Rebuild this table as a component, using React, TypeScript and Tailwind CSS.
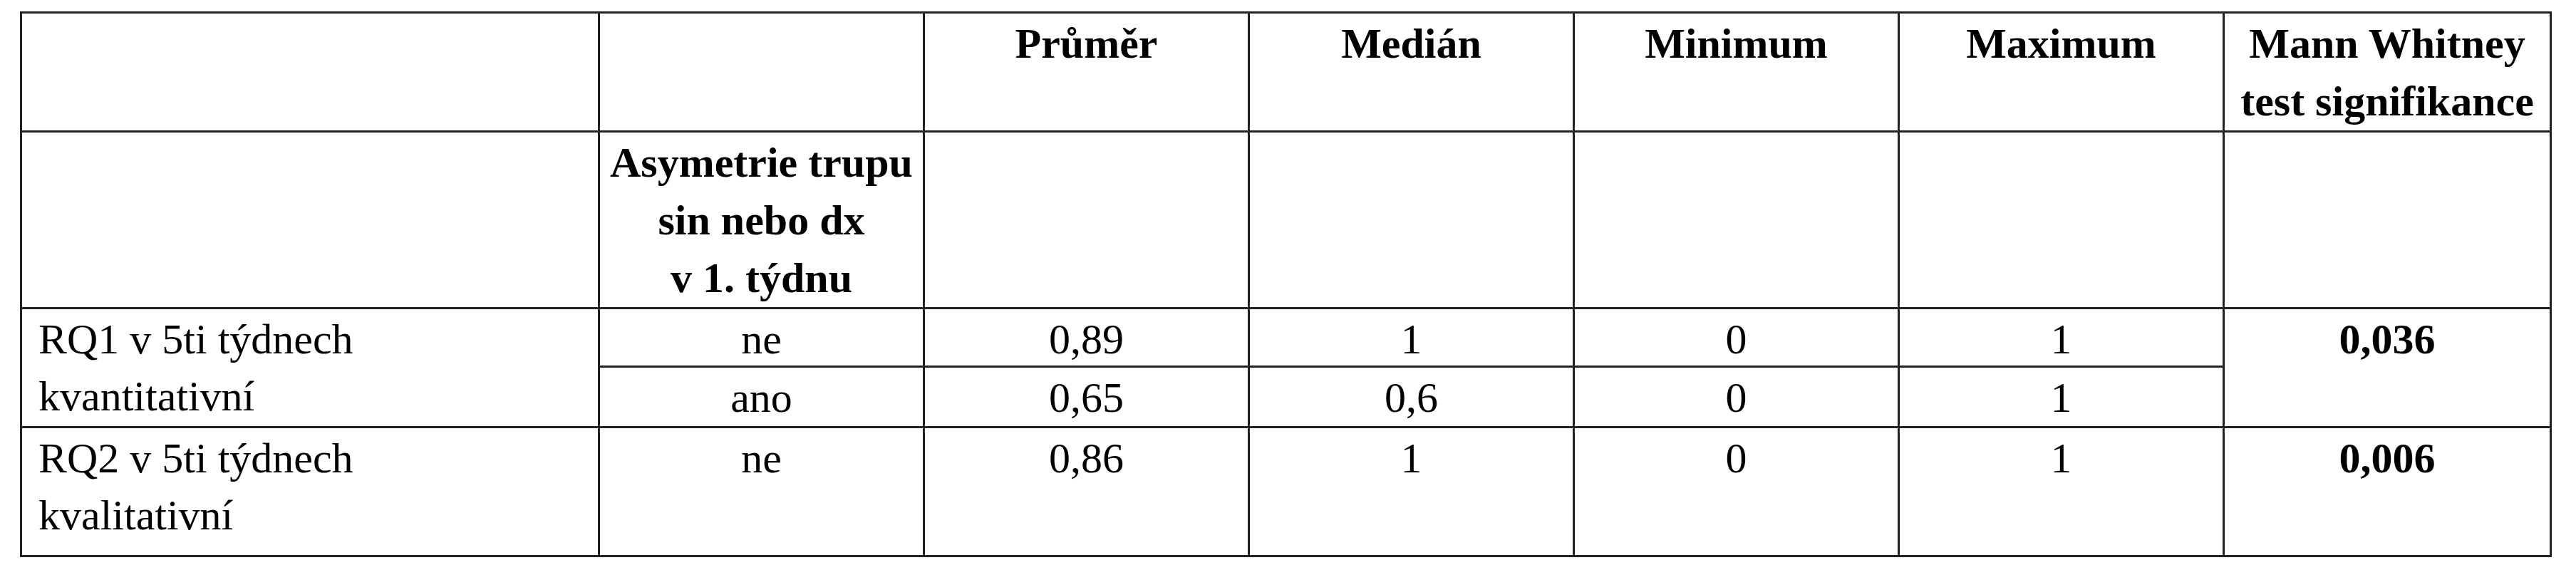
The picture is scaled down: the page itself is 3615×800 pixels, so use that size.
const headers = ["Průměr", "Medián", "Minimum", "Maximum"];

type Row = {
  label?: string[];
  group: string;
  values: string[];
  sig?: string;
  sigSpan?: number;
  height: string;
};

const rows: Row[] = [
  {
    label: ["RQ1 v 5ti týdnech", "kvantitativní"],
    group: "ne",
    values: ["0,89", "1", "0", "1"],
    sig: "0,036",
    sigSpan: 2,
    height: "h-[82px]",
  },
  { group: "ano", values: ["0,65", "0,6", "0", "1"], height: "h-[85px]" },
  {
    label: ["RQ2 v 5ti týdnech", "kvalitativní"],
    group: "ne",
    values: ["0,86", "1", "0", "1"],
    sig: "0,006",
    sigSpan: 1,
    height: "h-[181px]",
  },
];

const base = "border-[3px] border-[#222] align-top pb-0 px-[6px] text-center";
// header cells get a touch more line spacing than the body
const cell = `${base} pt-[2px] leading-[81px]`;
const spanCell = `${base} pt-[2px] leading-[80px]`;
// single-line body cells: tighter line box, same baseline, so the short rows stay 82px
const bodyCell = `${base} pt-[5px] leading-[74px]`;

export default function App() {
  return (
    <div className="min-h-screen bg-white pt-[16px] pl-[28px] font-['Liberation_Serif','Times_New_Roman',serif] text-[60px] text-black">
      <table className="table-fixed border-collapse w-[3550px]">
        <colgroup>
          <col className="w-[811px]" />
          <col className="w-[456px]" />
          <col className="w-[456px]" />
          <col className="w-[456px]" />
          <col className="w-[456px]" />
          <col className="w-[456px]" />
          <col className="w-[459px]" />
        </colgroup>
        <tbody>
          <tr className="h-[167px]">
            <td className={cell}></td>
            <td className={cell}></td>
            {headers.map((h) => (
              <td key={h} className={`${cell} font-bold`}>
                {h}
              </td>
            ))}
            <td className={`${cell} font-bold`}>Mann Whitney test signifikance</td>
          </tr>
          <tr className="h-[248px]">
            <td className={cell}></td>
            <td className={`${cell} font-bold`}>
              Asymetrie trupu
              <br />
              sin nebo dx
              <br />v 1. týdnu
            </td>
            <td className={cell}></td>
            <td className={cell}></td>
            <td className={cell}></td>
            <td className={cell}></td>
            <td className={cell}></td>
          </tr>
          {rows.map((r, i) => (
            <tr key={i} className={r.height}>
              {r.label && (
                <td rowSpan={r.sigSpan} className={`${spanCell} !text-left !pl-[23px]`}>
                  {r.label[0]}
                  <br />
                  {r.label[1]}
                </td>
              )}
              <td className={bodyCell}>{r.group}</td>
              {r.values.map((v, j) => (
                <td key={j} className={bodyCell}>
                  {v}
                </td>
              ))}
              {r.sig && (
                <td rowSpan={r.sigSpan} className={`${spanCell} font-bold`}>
                  {r.sig}
                </td>
              )}
            </tr>
          ))}
        </tbody>
      </table>
    </div>
  );
}
